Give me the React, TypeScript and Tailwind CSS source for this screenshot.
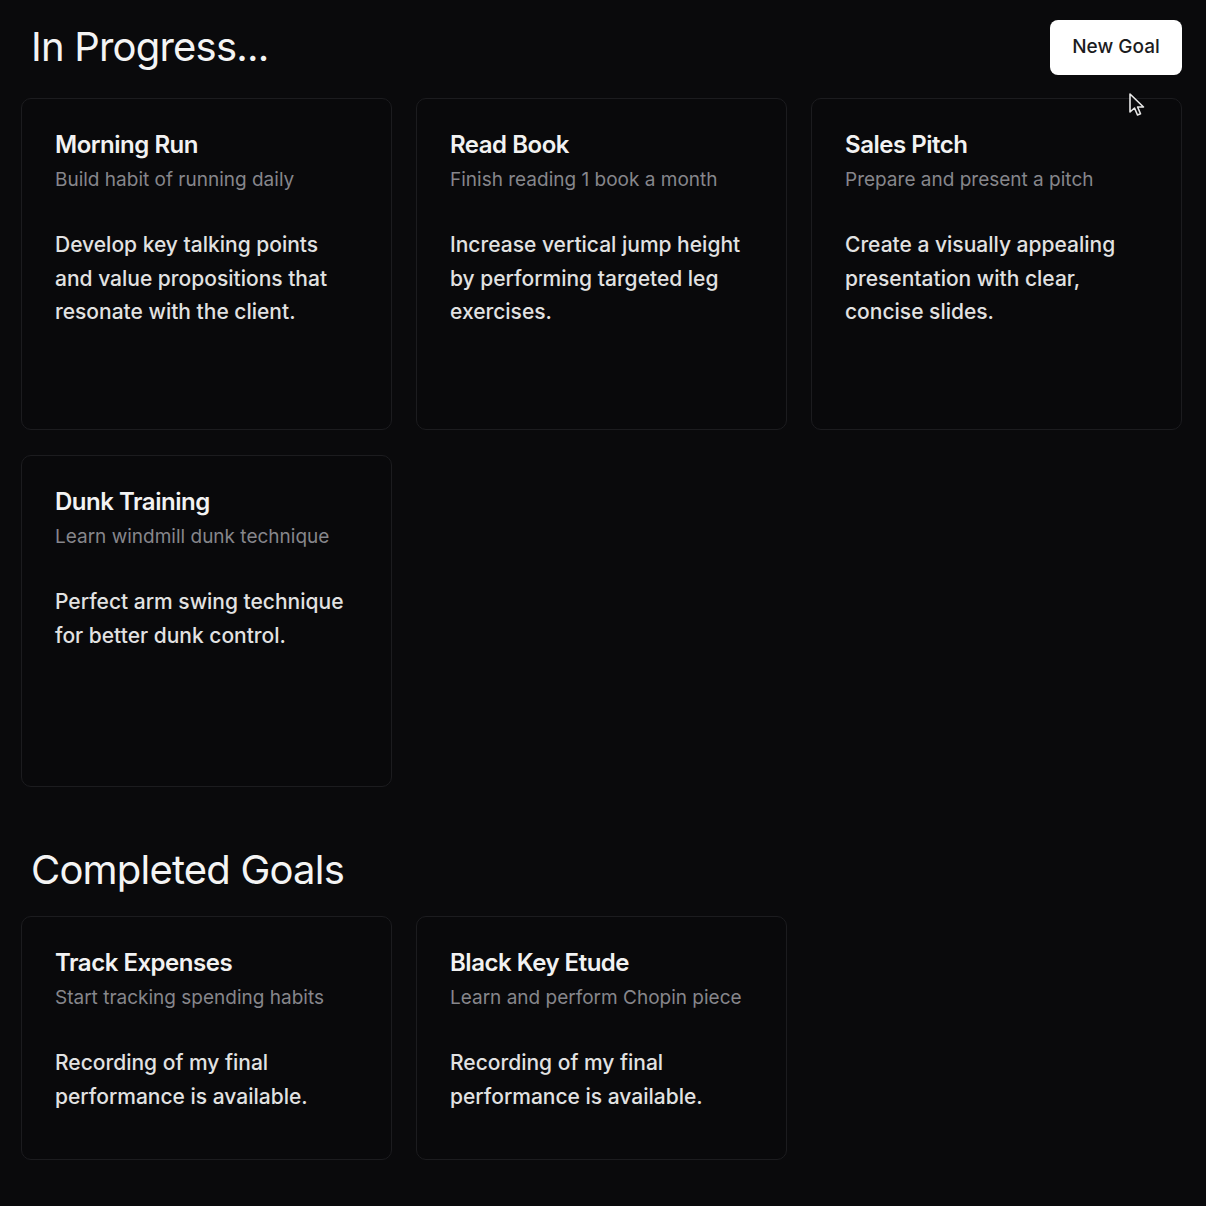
import React from 'react'

type Goal = {
  title: string
  subtitle: string
  body: string
}

const inProgress: Goal[] = [
  {
    title: 'Morning Run',
    subtitle: 'Build habit of running daily',
    body: 'Develop key talking points and value propositions that resonate with the client.',
  },
  {
    title: 'Read Book',
    subtitle: 'Finish reading 1 book a month',
    body: 'Increase vertical jump height by performing targeted leg exercises.',
  },
  {
    title: 'Sales Pitch',
    subtitle: 'Prepare and present a pitch',
    body: 'Create a visually appealing presentation with clear, concise slides.',
  },
  {
    title: 'Dunk Training',
    subtitle: 'Learn windmill dunk technique',
    body: 'Perfect arm swing technique for better dunk control.',
  },
]

const completed: Goal[] = [
  {
    title: 'Track Expenses',
    subtitle: 'Start tracking spending habits',
    body: 'Recording of my final performance is available.',
  },
  {
    title: 'Black Key Etude',
    subtitle: 'Learn and perform Chopin piece',
    body: 'Recording of my final performance is available.',
  },
]

function GoalCard({ goal, tall }: { goal: Goal; tall?: boolean }) {
  return (
    <div
      className={`rounded-[10px] border border-[#1c1c1f] bg-[#09090b] px-[33px] pt-[30px] pb-[46px] ${
        tall ? 'min-h-[332px]' : ''
      }`}
    >
      <h3 className="text-[24px] leading-[32px] font-semibold tracking-[-0.02em] text-[#f2f2f2]">{goal.title}</h3>
      <p className="mt-[6px] text-[19px] leading-[26px] text-[#86868b]">{goal.subtitle}</p>
      <p className="mt-[35px] pr-[8px] text-[21px] leading-[33.5px] font-medium text-[#e2e2e2]">{goal.body}</p>
    </div>
  )
}

function Cursor() {
  return (
    <svg
      className="absolute left-[1126px] top-[92px]"
      width="22"
      height="28"
      viewBox="0 0 22 28"
      fill="none"
    >
      <path
        d="M4 2 L4 20 L8.5 16 L11.5 23 L14.5 21.8 L11.6 15 L17.5 15 Z"
        fill="#0b0b0d"
        stroke="#e8e8e8"
        strokeWidth="1.6"
        strokeLinejoin="round"
      />
    </svg>
  )
}

export default function App() {
  return (
    <div
      className="relative min-h-[1206px] w-full bg-[#0a0a0c] pl-[21px] pr-[24px] pt-[20px] pb-[46px] text-white"
      style={{ fontFamily: 'Inter, "Noto Sans", sans-serif' }}
    >
      <div className="flex items-start justify-between">
        <h1 className="pl-[10px] pt-[1px] text-[40px] leading-[52px] font-normal tracking-[-0.02em] text-[#f4f4f4]">
          In Progress...
        </h1>
        <button className="h-[55px] w-[132px] rounded-[8px] bg-white text-[19px] font-medium text-[#1c1c1e]">
          New Goal
        </button>
      </div>

      <div className="mt-[23px] grid grid-cols-3 gap-x-[24px] gap-y-[25px]">
        {inProgress.map((goal, i) => (
          <GoalCard key={i} goal={goal} tall />
        ))}
      </div>

      <h2 className="mt-[57px] pl-[10px] text-[40px] leading-[52px] font-normal tracking-[-0.02em] text-[#f4f4f4]">
        Completed Goals
      </h2>

      <div className="mt-[20px] grid grid-cols-3 gap-x-[24px]">
        {completed.map((goal, i) => (
          <GoalCard key={i} goal={goal} />
        ))}
      </div>

      <Cursor />
    </div>
  )
}
